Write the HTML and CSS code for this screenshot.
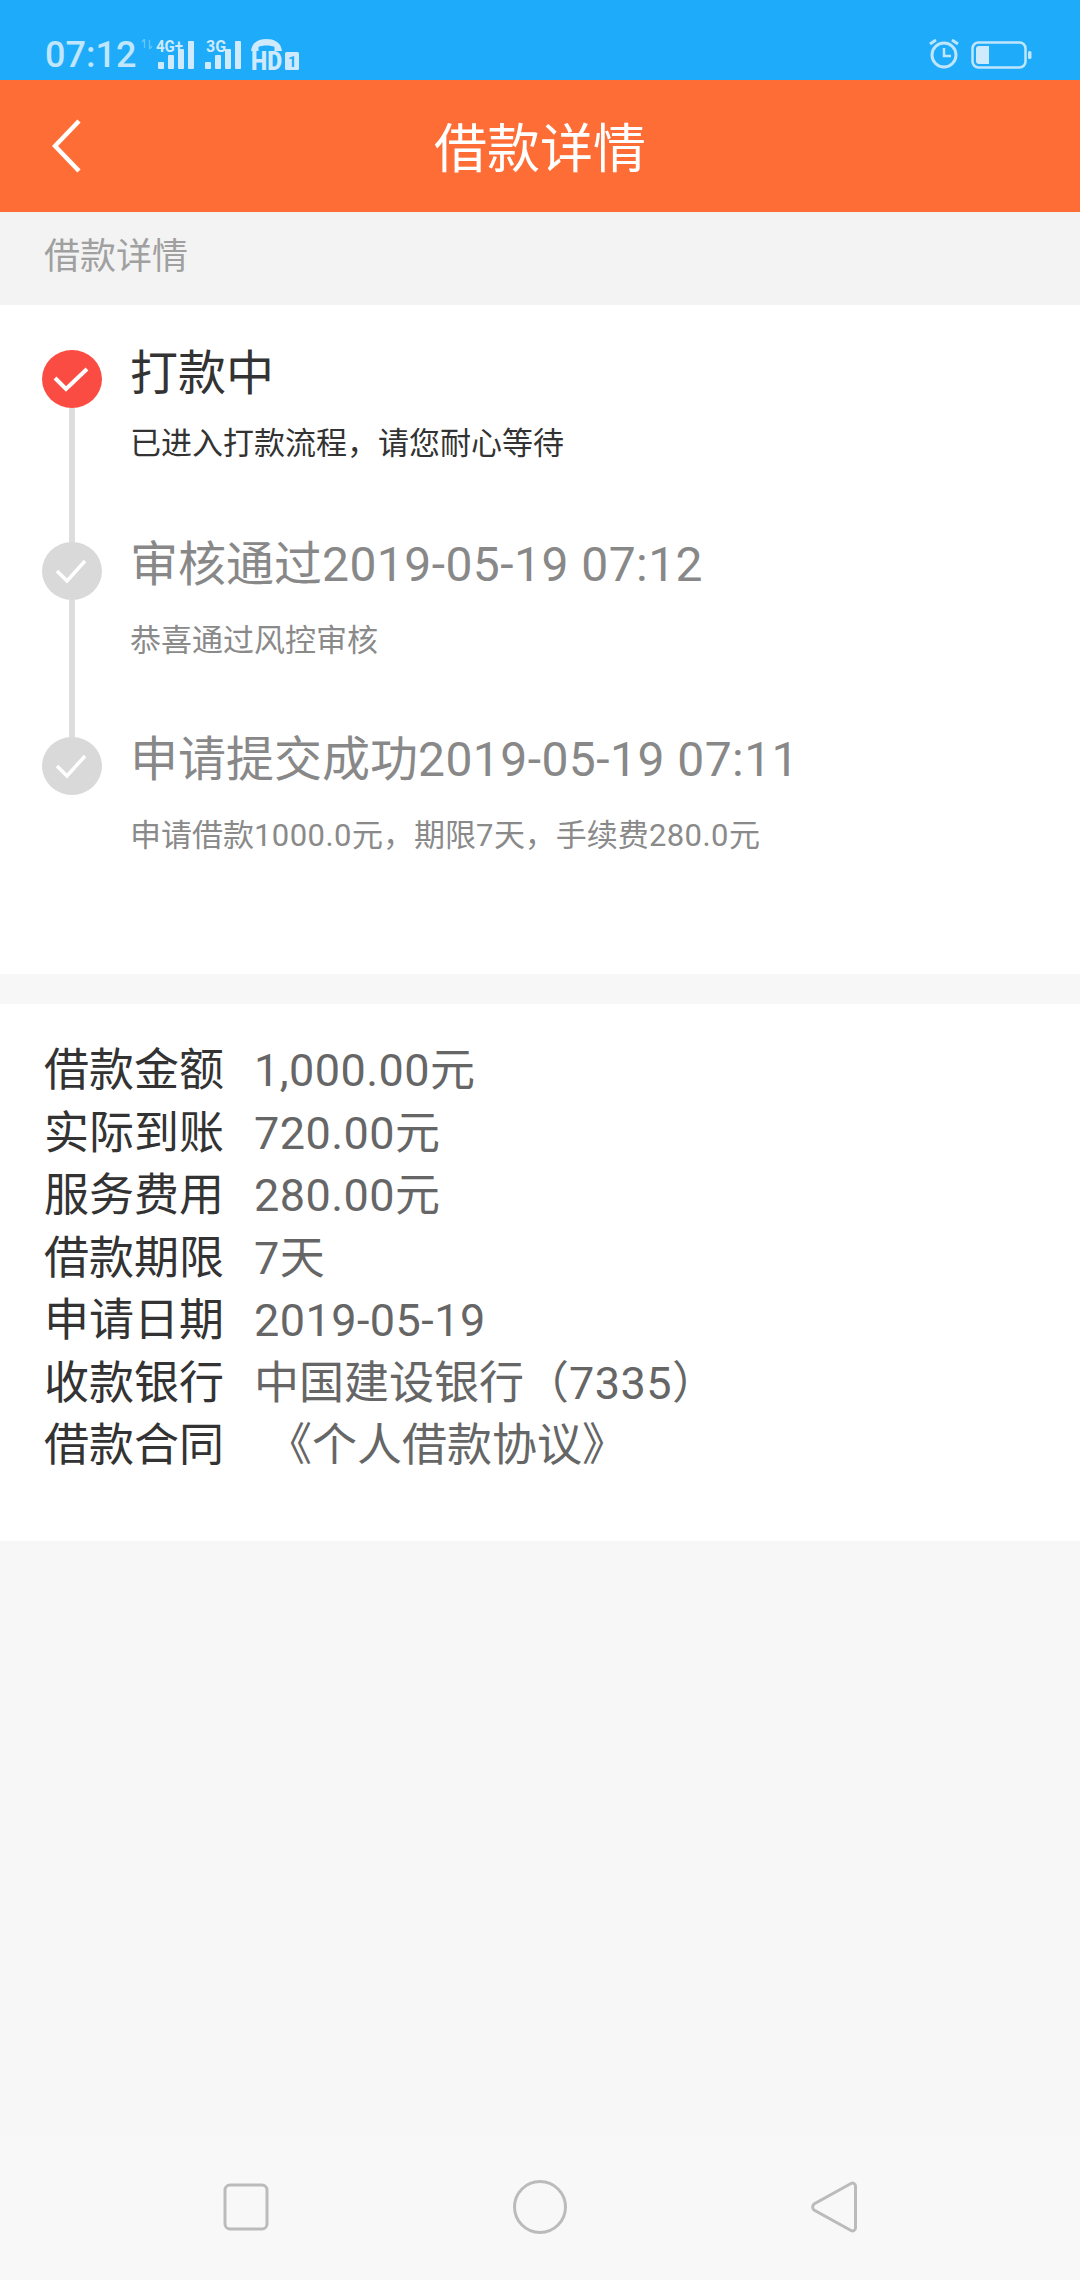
FILE: index.html
```html
<!DOCTYPE html>
<html lang="zh-CN">
<head>
    <meta charset="UTF-8">
    <meta name="viewport" content="width=device-width, initial-scale=1.0">
    <title>借款详情</title>
    <link rel="stylesheet" href="styles.css">
</head>
<body>

    <!-- Status Bar -->
    <div class="status-bar">
        <div class="status-left">
            <span class="status-time">07:12</span>
            <svg class="icon-arrows" width="12" height="10" viewBox="0 0 12 10"><path d="M3.5 0v9M3.5 0L1 3M8.5 10V1M8.5 10L11 7" fill="none" stroke="#bfe6fc" stroke-opacity=".45" stroke-width="1.3"/></svg>
            <svg class="icon-signal" width="42" height="30" viewBox="0 0 42 30">
                <text x="3" y="12" class="signal-text" textLength="27" lengthAdjust="spacingAndGlyphs">4G+</text>
                <rect x="5" y="22" width="6" height="7" rx="1"/>
                <rect x="15" y="15" width="6" height="14" rx="1"/>
                <rect x="25" y="9" width="6" height="20" rx="1"/>
                <rect x="35" y="1" width="6" height="28" rx="1"/>
            </svg>
            <svg class="icon-signal" width="36" height="30" viewBox="0 0 36 30">
                <text x="1" y="12" class="signal-text">3G</text>
                <rect x="0" y="22" width="6" height="7" rx="1"/>
                <rect x="10" y="15" width="6" height="14" rx="1"/>
                <rect x="20" y="9" width="6" height="20" rx="1"/>
                <rect x="30" y="1" width="6" height="28" rx="1"/>
            </svg>
            <svg class="icon-hd" width="48" height="31" viewBox="0 0 48 31">
                <path d="M0 12C1 3 8 0 15.500 0S30 3 31 12h-7.500V8C20 6 11 6 7.500 8v4z"/>
                <text x="0" y="30.500" class="hd-text" textLength="31" lengthAdjust="spacingAndGlyphs">HD</text>
                <rect x="34" y="13" width="14" height="18" rx="1.500"/>
                <text x="37" y="28" class="hd-one">1</text>
            </svg>
        </div>
        <div class="status-right">
            <svg width="32" height="32" viewBox="0 0 32 32">
                <circle cx="16" cy="18" r="12" fill="none" stroke="#bfe6fc" stroke-width="3"/>
                <path d="M16 11v8h7" fill="none" stroke="#bfe6fc" stroke-width="2.500"/>
                <path d="M2 7l6-4M30 7l-6-4" fill="none" stroke="#bfe6fc" stroke-width="3"/>
            </svg>
            <svg width="61" height="28" viewBox="0 0 61 28">
                <rect x="1.500" y="1.500" width="53" height="25" rx="6" fill="none" stroke="#bfe6fc" stroke-width="2.500"/>
                <path d="M5 8a3 3 0 0 1 3-3h10v18H8a3 3 0 0 1-3-3z" fill="#cfe9fd"/>
                <rect x="57" y="10" width="3.500" height="8" rx="1.500" fill="#bfe6fc"/>
            </svg>
        </div>
    </div>

    <!-- Title Bar -->
    <header class="title-bar">
        <svg class="back-icon" width="30" height="54" viewBox="0 0 30 54"><path d="M27 2L3 27l24 25" fill="none" stroke="#fff" stroke-width="4.500"/></svg>
        <h1>借款详情</h1>
    </header>

    <div class="section-label">借款详情</div>

    <!-- Progress Timeline -->
    <div class="timeline">
        <div class="step step-current">
            <div class="rail">
                <span class="dot">
                    <svg width="40" height="30" viewBox="0 0 40 30"><path d="M3 14l11 11L35 5" fill="none" stroke="#fff" stroke-width="4"/></svg>
                </span>
                <span class="rail-line"></span>
            </div>
            <div class="step-body">
                <div class="step-title">打款中</div>
                <div class="step-sub">已进入打款流程，请您耐心等待</div>
            </div>
        </div>
        <div class="step step-done">
            <div class="rail">
                <span class="dot">
                    <svg width="40" height="30" viewBox="0 0 40 30"><path d="M5 15l10 10L33 5" fill="none" stroke="#fff" stroke-width="3.500"/></svg>
                </span>
                <span class="rail-line"></span>
            </div>
            <div class="step-body">
                <div class="step-title">审核通过<span class="num">2019-05-19 07:12</span></div>
                <div class="step-sub">恭喜通过风控审核</div>
            </div>
        </div>
        <div class="step step-done">
            <div class="rail">
                <span class="dot">
                    <svg width="40" height="30" viewBox="0 0 40 30"><path d="M5 15l10 10L33 5" fill="none" stroke="#fff" stroke-width="3.500"/></svg>
                </span>
            </div>
            <div class="step-body">
                <div class="step-title">申请提交成功<span class="num">2019-05-19 07:11</span></div>
                <div class="step-sub">申请借款<span class="num">1000.0</span>元，期限<span class="num">7</span>天，手续费<span class="num">280.0</span>元</div>
            </div>
        </div>
    </div>

    <!-- Loan Details -->
    <div class="details">
        <div class="row"><span class="row-label">借款金额</span><span class="row-value"><span class="num">1,000.00</span>元</span></div>
        <div class="row"><span class="row-label">实际到账</span><span class="row-value"><span class="num">720.00</span>元</span></div>
        <div class="row"><span class="row-label">服务费用</span><span class="row-value"><span class="num">280.00</span>元</span></div>
        <div class="row"><span class="row-label">借款期限</span><span class="row-value"><span class="num">7</span>天</span></div>
        <div class="row"><span class="row-label">申请日期</span><span class="row-value"><span class="num">2019-05-19</span></span></div>
        <div class="row"><span class="row-label">收款银行</span><span class="row-value row-bank">中国建设银行（<span class="num">7335</span>）</span></div>
        <div class="row"><span class="row-label">借款合同</span><span class="row-value row-link">《个人借款协议》</span></div>
    </div>

    <div class="spacer"></div>

    <!-- Navigation Bar -->
    <div class="nav-bar">
        <svg width="46" height="48" viewBox="0 0 46 48"><rect x="2" y="2" width="42" height="44" rx="5" fill="none" stroke="#bbb" stroke-width="3"/></svg>
        <svg width="56" height="56" viewBox="0 0 56 56"><circle cx="28" cy="28" r="25.500" fill="none" stroke="#bbb" stroke-width="3"/></svg>
        <svg width="46" height="54" viewBox="0 0 46 54"><path d="M40 3.500a3 3 0 0 1 4.500 2.500v42a3 3 0 0 1-4.500 2.500L3 30a4 4 0 0 1 0-6z" fill="none" stroke="#bbb" stroke-width="3"/></svg>
    </div>

</body>
</html>
```

FILE: styles.css
```css
/* Basic Styles */
body {
    font-family: Roboto, "Noto Sans CJK SC", sans-serif;
    background-color: #f7f7f7;
    margin: 0;
    padding: 0;
    height: 2280px;
    display: flex;
    flex-direction: column;
}
.num {
    letter-spacing: .45px;
}

/* Status Bar */
.status-bar {
    height: 80px;
    flex-shrink: 0;
    box-sizing: border-box;
    background-color: #1eabf9;
    padding: 0 48px 10px 45px;
    display: flex;
    justify-content: space-between;
    align-items: flex-end;
}
.status-left {
    display: flex;
    align-items: flex-end;
}
.status-right {
    display: flex;
    align-items: flex-end;
    gap: 11px;
    margin-bottom: 1px;
}
.status-time {
    color: #bfe6fc;
    font-size: 36px;
    font-weight: 500;
    line-height: 30px;
    margin-right: 5px;
}
.icon-arrows {
    align-self: flex-start;
    margin-bottom: 20px;
}
.icon-signal {
    fill: #cfeafc;
    margin-right: 10px;
    overflow: visible;
}
.signal-text {
    font-size: 16px;
    font-weight: 700;
}
.icon-hd {
    fill: #cfeafc;
    overflow: visible;
}
.hd-text {
    font-size: 25px;
    font-weight: 900;
}
.hd-one {
    font-size: 15px;
    font-weight: 700;
    fill: #1eabf9;
}

/* Title Bar */
.title-bar {
    height: 132px;
    flex-shrink: 0;
    background-color: #ff6d36;
    display: grid;
    grid-template-columns: 1fr auto 1fr;
    align-items: center;
}
.title-bar h1 {
    margin: -3px 0 0;
    color: #fff;
    font-size: 53px;
    font-weight: 400;
    grid-column: 2;
    grid-row: 1;
}
.back-icon {
    grid-column: 1;
    grid-row: 1;
    margin-left: 52px;
}

.section-label {
    height: 93px;
    flex-shrink: 0;
    line-height: 90px;
    padding-left: 44px;
    background-color: #f3f3f3;
    color: #a0a0a0;
    font-size: 36px;
}

/* Progress Timeline */
.timeline {
    height: 669px;
    flex-shrink: 0;
    box-sizing: border-box;
    padding: 45px 0 0 42px;
    background-color: #fff;
}
.step {
    display: flex;
    height: 195px;
}
.step-current {
    height: 192px;
}
.rail {
    width: 60px;
    display: flex;
    flex-direction: column;
    align-items: center;
}
.dot {
    width: 60px;
    height: 58px;
    flex-shrink: 0;
    border-radius: 50%;
    background-color: #d9d9d9;
    display: flex;
    align-items: center;
    justify-content: center;
}
.step-current .dot {
    background-color: #fb4c43;
}
.rail-line {
    width: 6px;
    flex: 1;
    background-color: #ddd;
}
.step-body {
    margin-left: 28px;
}
.step-title {
    font-size: 48px;
    line-height: 46px;
    color: #888;
}
.step-sub {
    font-size: 31px;
    line-height: 40px;
    margin-top: 33px;
    color: #8a8a8a;
}
.step-current .step-title,
.step-current .step-sub {
    color: #333;
}
.step-current .step-title {
    padding-top: 1px;
}
.step-current .step-sub {
    margin-top: 27px;
}

/* Loan Details */
.details {
    height: 537px;
    flex-shrink: 0;
    box-sizing: border-box;
    margin-top: 30px;
    padding: 36px 0 0 44px;
    background-color: #fff;
    font-size: 45px;
    line-height: 62.500px;
}
.row {
    display: flex;
}
.row-label {
    width: 210px;
    color: #333;
}
.row-value {
    color: #666;
}
.row-link {
    margin-left: 13px;
}

.spacer {
    flex: 1;
}

/* Navigation Bar */
.nav-bar {
    height: 144px;
    flex-shrink: 0;
    background-color: #f8f8f8;
    display: flex;
    align-items: center;
    justify-content: space-between;
    box-sizing: border-box;
    padding: 0 223px 2px 223px;
}
```
